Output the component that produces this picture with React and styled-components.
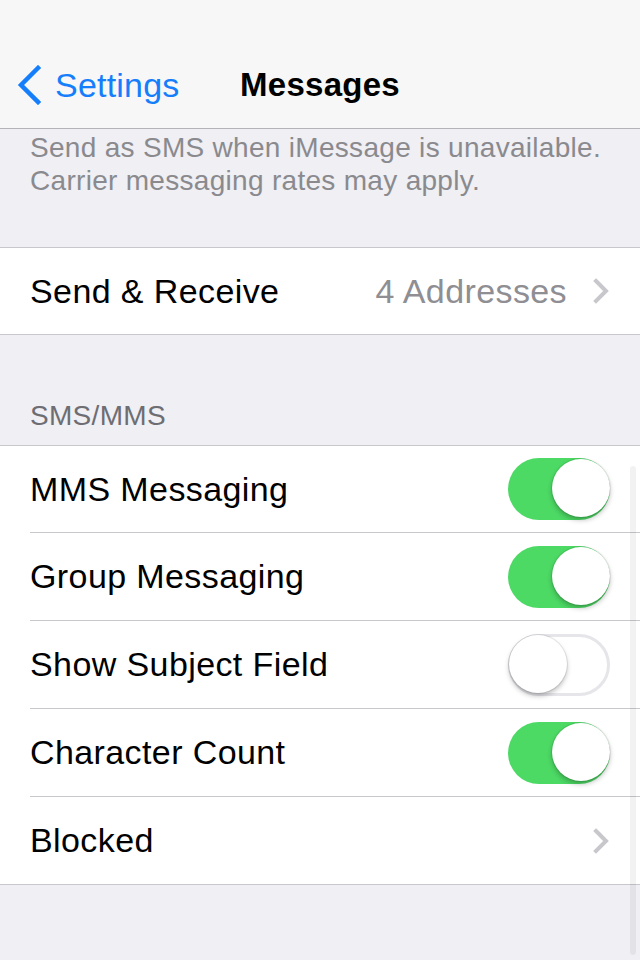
import React from "react";
import styled, { createGlobalStyle } from "styled-components";

const GlobalStyle = createGlobalStyle`
  html, body {
    margin: 0;
    padding: 0;
    background: #efeff4;
  }
  body {
    font-family: "Liberation Sans", Arial, sans-serif;
    -webkit-font-smoothing: antialiased;
  }
`;

const Screen = styled.div`
  position: relative;
  width: 640px;
  height: 960px;
  overflow: hidden;
  background: #efeff4;
`;

const NavBar = styled.div`
  height: 129px;
  background: #f7f7f7;
  border-bottom: 1px solid #b4b4b8;
  box-sizing: border-box;
  display: grid;
  grid-template-columns: 1fr auto 1fr;
  align-items: center;
  padding-top: 42px;
`;

const BackButton = styled.div`
  display: flex;
  align-items: center;
  gap: 14px;
  padding-left: 17px;
  color: #157efb;
  font-size: 34px;
  letter-spacing: 0.2px;
`;

const Title = styled.div`
  font-size: 33px;
  font-weight: bold;
  letter-spacing: 0.25px;
  color: #000;
`;

const Footer = styled.div`
  padding: 2px 30px 0 30px;
  height: 118px;
  box-sizing: border-box;
  font-size: 28px;
  line-height: 33px;
  letter-spacing: 0.3px;
  color: #8a8a8e;
`;

const Group = styled.div`
  background: #fff;
  border-top: 1px solid #c8c7cc;
  border-bottom: 1px solid #c8c7cc;
`;

const Row = styled.div`
  height: ${(p) => (p.first ? "86px" : "87px")};
  display: flex;
  align-items: center;
  margin-left: 30px;
  padding-right: 30px;
  border-top: ${(p) => (p.first ? "none" : "1px solid #c8c7cc")};
  font-size: 34px;
  letter-spacing: 0.4px;
  color: #000;
`;

const Label = styled.div`
  flex: 1;
`;

const Value = styled.div`
  color: #8e8e93;
  margin-right: 26px;
`;

const SectionHeader = styled.div`
  height: 110px;
  box-sizing: border-box;
  padding: 0 30px 15px;
  display: flex;
  align-items: flex-end;
  font-size: 28px;
  line-height: 28px;
  letter-spacing: 0.3px;
  color: #6d6d72;
`;

const Track = styled.div`
  position: relative;
  width: 102px;
  height: 62px;
  border-radius: 31px;
  box-sizing: border-box;
  background: ${(p) => (p.on ? "#4cd964" : "#fff")};
  border: ${(p) => (p.on ? "none" : "3px solid #e5e5ea")};
`;

const Knob = styled.div`
  position: absolute;
  top: ${(p) => (p.on ? "1px" : "-2px")};
  left: ${(p) => (p.on ? "44px" : "-2px")};
  width: 58px;
  height: 58px;
  border-radius: 50%;
  background: #fff;
  box-shadow: 0 3px 5px rgba(0, 0, 0, 0.25), 0 0 0 1px rgba(0, 0, 0, 0.08);
`;

const ScrollIndicator = styled.div`
  position: absolute;
  left: 630px;
  top: 466px;
  width: 6px;
  height: 489px;
  border-radius: 3px;
  background: rgba(0, 0, 0, 0.05);
`;

function Chevron({ color = "#c7c7cc" }) {
  return (
    <svg width="17" height="26" viewBox="0 0 17 26">
      <path d="M3 3 L13 13 L3 23" fill="none" stroke={color} strokeWidth="4" strokeLinecap="square" />
    </svg>
  );
}

function BackChevron() {
  return (
    <svg width="24" height="40" viewBox="0 0 24 40">
      <path d="M21 3 L4 20 L21 37" fill="none" stroke="#157efb" strokeWidth="4.5" strokeLinecap="square" />
    </svg>
  );
}

function Switch({ on }) {
  return (
    <Track on={on ? 1 : 0}>
      <Knob on={on ? 1 : 0} />
    </Track>
  );
}

const smsRows = [
  { label: "MMS Messaging", toggle: true, on: true },
  { label: "Group Messaging", toggle: true, on: true },
  { label: "Show Subject Field", toggle: true, on: false },
  { label: "Character Count", toggle: true, on: true },
  { label: "Blocked", toggle: false },
];

export default function App() {
  return (
    <Screen>
      <GlobalStyle />
      <NavBar>
        <BackButton>
          <BackChevron />
          Settings
        </BackButton>
        <Title>Messages</Title>
        <div />
      </NavBar>
      <Footer>
        Send as SMS when iMessage is unavailable.
        <br />
        Carrier messaging rates may apply.
      </Footer>
      <Group>
        <Row first>
          <Label>Send &amp; Receive</Label>
          <Value>4 Addresses</Value>
          <Chevron />
        </Row>
      </Group>
      <SectionHeader>SMS/MMS</SectionHeader>
      <Group>
        {smsRows.map((r, i) => (
          <Row key={r.label} first={i === 0}>
            <Label>{r.label}</Label>
            {r.toggle ? <Switch on={r.on} /> : <Chevron />}
          </Row>
        ))}
      </Group>
      <ScrollIndicator />
    </Screen>
  );
}
